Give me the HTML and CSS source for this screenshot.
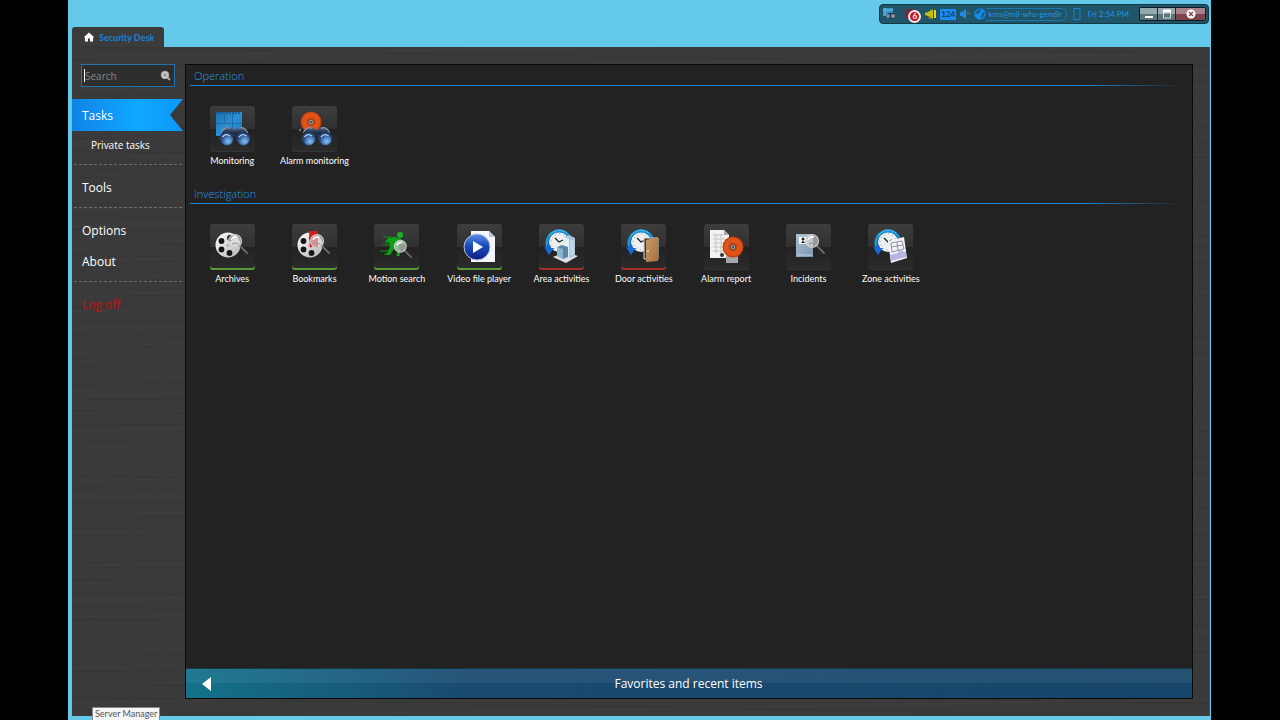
FILE: index.html
```html
<!DOCTYPE html>
<html lang="en">
<head>
<meta charset="utf-8">
<title>Security Desk</title>
<link rel="stylesheet" href="styles.css">
</head>
<body>
<svg class="defs" aria-hidden="true">
  <defs>
    <linearGradient id="screen" x1="0" y1="0" x2="1" y2="1"><stop offset="0" stop-color="#1d6fae"/><stop offset=".5" stop-color="#2b8fd2"/><stop offset="1" stop-color="#1a7cc8"/></linearGradient>
    <radialGradient id="lens" cx=".6" cy=".7"><stop offset="0" stop-color="#8dc0ee"/><stop offset=".6" stop-color="#4c84c4"/><stop offset="1" stop-color="#27467c"/></radialGradient>
    <linearGradient id="barrel" x1="0" y1="0" x2="0" y2="1"><stop offset="0" stop-color="#5c6d88"/><stop offset=".4" stop-color="#1d2a42"/><stop offset="1" stop-color="#35588f"/></linearGradient>
    <radialGradient id="bellfill"><stop offset="0" stop-color="#a83812"/><stop offset=".4" stop-color="#d9480f"/><stop offset=".8" stop-color="#e2561a"/><stop offset="1" stop-color="#b23408"/></radialGradient>
    <linearGradient id="metal" x1="0" y1="0" x2="1" y2="1"><stop offset="0" stop-color="#ffffff"/><stop offset="1" stop-color="#b4b4b4"/></linearGradient>
    <linearGradient id="play" x1="0" y1="0" x2="0" y2="1"><stop offset="0" stop-color="#5c8ee6"/><stop offset=".45" stop-color="#1c4cba"/><stop offset="1" stop-color="#0a1f86"/></linearGradient>
    <linearGradient id="wood" x1="0" y1="0" x2="1" y2="1"><stop offset="0" stop-color="#c89a6c"/><stop offset="1" stop-color="#a8703c"/></linearGradient>
    <linearGradient id="card" x1="0" y1="0" x2="1" y2="1"><stop offset="0" stop-color="#a9bfd2"/><stop offset="1" stop-color="#7c97ae"/></linearGradient>
    <symbol id="binoculars" viewBox="0 0 30 18">
      <path d="M1 11 5 3Q7 0 11 1L14 3H16L19 1Q23 0 25 3L29 11 27 15 18 14 16 9H14L12 14 3 15Z" fill="url(#barrel)"/>
      <path d="M3 6Q6 0 11 2M19 2Q24 0 27 6" stroke="#91a1b8" fill="none"/>
      <circle cx="8" cy="11.500" r="6" fill="url(#lens)" stroke="#243c65" stroke-width=".6"/>
      <circle cx="23" cy="11.500" r="6" fill="url(#lens)" stroke="#243c65" stroke-width=".6"/>
      <path d="M4 10Q7 6 11 9M19 10Q22 6 26 9" stroke="#b8d9f5" fill="none"/>
    </symbol>
    <symbol id="bell" viewBox="0 0 22 22">
      <circle cx="11" cy="11" r="10.500" fill="url(#bellfill)"/>
      <circle cx="11" cy="11" r="6" fill="none" stroke="#f47b3b" stroke-opacity=".3"/>
      <circle cx="11" cy="11" r="2.500" fill="#aaa" stroke="#5c4a42"/>
      <circle cx="11" cy="11" r="1" fill="#333"/>
    </symbol>
    <symbol id="reel" viewBox="0 0 26 26">
      <circle cx="13" cy="13" r="12.500" fill="url(#metal)"/>
      <g fill="#161616"><circle cx="6.500" cy="9" r="2.900"/><circle cx="6.500" cy="17.500" r="2.900"/><circle cx="14.500" cy="21" r="2.900"/><circle cx="15" cy="6" r="2.900"/></g>
      <circle cx="12.500" cy="13.500" r="1" fill="#999"/>
    </symbol>
    <symbol id="magnifier" viewBox="0 0 22 22">
      <path d="M12 12 20 20" stroke="#686868" stroke-width="2" stroke-linecap="round"/>
      <circle cx="8" cy="8" r="6.500" fill="#ddd" fill-opacity=".6" stroke="#c9c9c9" stroke-width="1.200"/>
      <path d="M4 7Q6 3 10 4" stroke="#fff" stroke-width="1.500" fill="none"/>
      <path d="M5 11Q8 9 11 11" stroke="#999" fill="none"/>
    </symbol>
    <symbol id="history" viewBox="0 0 28 28">
      <circle cx="15" cy="14" r="10" fill="#eceff0"/>
      <circle cx="15" cy="14" r="8" fill="none" stroke="#90999e" stroke-dasharray="1 3.200"/>
      <path d="M11 10 15 14 19 12" stroke="#222" stroke-width="1.300" fill="none"/>
      <path d="M26 10A12 12 0 0 0 4 20" stroke="#1c93d6" stroke-width="3" fill="none"/>
      <path d="M23 5A12 12 0 0 0 5 8" stroke="#57c0ed" fill="none"/>
      <path d="M0 19 5 27 10 20 7 20 6 17 3 17 3 20Z" fill="#1668d4"/>
    </symbol>
  </defs>
</svg>

<div class="window">
  <header class="titlebar">
    <div class="tab">
      <svg width="10" height="10" viewBox="0 0 10 10"><path d="M5 .5 0 5 1 6V9.500H4V6.500H6V9.500H9V6L10 5Z" fill="#fff"/></svg>
      <span>Security Desk</span>
    </div>
    <div class="tray">
      <svg width="14" height="14" viewBox="0 0 14 14"><path d="M1 1H11V9H1Z" fill="#3796c4"/><path d="M1 3H11M3 1V9" stroke="#65bddc"/><path d="M4 8Q7 4 13 7L13 10 11 12H8L7 10 5 11 3 10Z" fill="#24364b"/><circle cx="6" cy="9" r="2" fill="#788fa2"/><circle cx="11" cy="9" r="2" fill="#8e9a9f"/></svg>
      <div class="alarms">
        <svg width="16" height="14" viewBox="0 0 16 14"><path d="M3 9V4Q4 2 7 2Q10 2 11 4V9L13 11H1Z" fill="#7a2436"/><path d="M2 1 0 4M12 1 14 4" stroke="#8a2033"/></svg>
        <span class="badge">6</span>
      </div>
      <svg width="13" height="12" viewBox="0 0 13 12"><path d="M1 5 4 4 9 1V11L4 8 1 7Z" fill="#c5bd14"/><path d="M10 2H12V10H10Z" fill="#e0d521"/><path d="M4 8 5 11H7L6 8Z" fill="#8a8a17"/></svg>
      <div class="count">124</div>
      <svg width="12" height="12" viewBox="0 0 12 12"><path d="M1 4H3L7 1V11L3 8H1Z" fill="#208be0"/><path d="M8 4 11 7M11 4 8 7" stroke="#a65a28"/></svg>
      <div class="account">
        <svg width="12" height="12" viewBox="0 0 12 12"><circle cx="6" cy="6" r="5.800" fill="#128be5"/><path d="M1 6Q3 1 7 1L6 4 3 6ZM8 5 11 4 10 8 7 11Z" fill="#1c5c88"/></svg>
        <span class="user">kms@mil-whs-gendir</span>
      </div>
      <svg width="8" height="12" viewBox="0 0 8 12"><rect x="1" y=".5" width="6" height="11" fill="none" stroke="#1b82c8"/></svg>
      <time class="clock">Fri 2:54 PM</time>
      <div class="controls">
        <button aria-label="Minimize"><svg width="10" height="10" viewBox="0 0 10 10"><path d="M1 8H9" stroke="#fff" stroke-width="2"/></svg></button>
        <button aria-label="Maximize"><svg width="10" height="10" viewBox="0 0 10 10"><path d="M1.500 2V9H8.500V2" fill="none" stroke="#ddd"/><path d="M1 2H9" stroke="#fff" stroke-width="3"/></svg></button>
        <button class="close" aria-label="Close"><svg width="10" height="10" viewBox="0 0 10 10"><circle cx="5" cy="5" r="4.500" fill="#fff"/><path d="M3 3 7 7M7 3 3 7" stroke="#7d4a55" stroke-width="1.500"/></svg></button>
      </div>
    </div>
  </header>

  <div class="content">
    <nav class="sidebar">
      <label class="search">
        <input type="text" placeholder="Search" aria-label="Search">
        <svg width="12" height="12" viewBox="0 0 12 12"><path d="M7 7 10 10" stroke="#aaa" stroke-width="2"/><circle cx="5" cy="5" r="3.800" fill="#ccc" stroke="#aaa"/><path d="M3 5H7M5 3V7" stroke="#888"/></svg>
      </label>
      <a class="item active" href="#">Tasks</a>
      <a class="subitem" href="#">Private tasks</a>
      <hr>
      <a class="item" href="#">Tools</a>
      <hr>
      <a class="item" href="#">Options</a>
      <a class="item" href="#">About</a>
      <hr>
      <a class="item logoff" href="#">Log off</a>
    </nav>

    <main class="panel">
      <div class="groups">
        <section>
          <h2>Operation</h2>
          <div class="tiles">
            <button class="tile"><svg class="icon" viewBox="0 0 45 46"><path d="M6 6H32V30H6Z" fill="url(#screen)"/><path d="M7 7H31" stroke="#0c3b66" stroke-dasharray="2 1"/><path d="M6 17.500H32M22.500 8V30M14.500 8V17" stroke="#145b93" stroke-opacity=".6"/><use href="#binoculars" x="8" y="20" width="33" height="20"/></svg><span>Monitoring</span></button>
            <button class="tile"><svg class="icon" viewBox="0 0 45 46"><use href="#bell" x="8" y="5" width="22" height="22"/><circle cx="8" cy="24" r="1" fill="#999"/><use href="#binoculars" x="8" y="20" width="33" height="20"/></svg><span>Alarm monitoring</span></button>
          </div>
        </section>
        <section>
          <h2>Investigation</h2>
          <div class="tiles">
            <button class="tile"><svg class="icon green" viewBox="0 0 45 46"><use href="#reel" x="5" y="8" width="26" height="26"/><use href="#magnifier" x="17" y="9" width="22" height="22"/></svg><span>Archives</span></button>
            <button class="tile"><svg class="icon green" viewBox="0 0 45 46"><use href="#reel" x="5" y="8" width="26" height="26"/><path d="M17 7H26V24L21 22 18 24Z" fill="#d31c1c"/><use href="#magnifier" x="17" y="9" width="22" height="22"/></svg><span>Bookmarks</span></button>
            <button class="tile"><svg class="icon green" viewBox="0 0 45 46"><path d="M9 13H20M11 17H18M6 27H16M9 21H20M10 30H13" stroke="#0b8a12" stroke-width="2" stroke-opacity=".55"/><path d="M14 14 22 13 26 16 25 24 20 25 16 31 12 31 16 23 15 18 11 20Z" fill="#10a018"/><path d="M20 22 25 25 24 32M24 15 30 19" stroke="#12a51a" stroke-width="3" fill="none"/><circle cx="26" cy="11" r="3" fill="#16b41e"/><use href="#magnifier" x="19" y="15" width="20" height="20"/></svg><span>Motion search</span></button>
            <button class="tile"><svg class="icon green" viewBox="0 0 45 46"><path d="M14 7H32L38 13V38H14Z" fill="#f4f6fa"/><path d="M32 7V13H38Z" fill="#b9c4d6"/><circle cx="20" cy="23" r="13" fill="url(#play)" stroke="#b8c4dc"/><path d="M16 17 26 23 16 29Z" fill="#fff"/></svg><span>Video file player</span></button>
            <button class="tile"><svg class="icon red" viewBox="0 0 45 46"><use href="#history" x="5" y="4" width="28" height="28"/><path d="M14 33 26 28 39 32 27 39Z" fill="#dce4ea"/><path d="M25 13 30 11 36 14V32L31 34 25 31Z" fill="#a9c6dc"/><path d="M25 13 30 15V34L25 31Z" fill="#e3eef5"/><path d="M18 23 23 21 29 23V33L24 35 18 32Z" fill="#5a87aa"/><path d="M18 23 24 25V35L18 32Z" fill="#8eb3cd"/><path d="M32 16V31M34 16V31" stroke="#d5e5f0"/></svg><span>Area activities</span></button>
            <button class="tile"><svg class="icon red" viewBox="0 0 45 46"><use href="#history" x="5" y="4" width="28" height="28"/><path d="M23 14H37V35H23Z" fill="#3f3b36" stroke="#dcd9d2"/><path d="M25 16 37 13V37L25 38Z" fill="url(#wood)"/><circle cx="27" cy="27" r="1" fill="#f0d8a0"/></svg><span>Door activities</span></button>
            <button class="tile"><svg class="icon" viewBox="0 0 45 46"><path d="M6 6H20L25 11V34H6Z" fill="#f1f1f1"/><path d="M20 6V11H25Z" fill="#aaa"/><path d="M9 11H20M9 15H21M9 19H21M9 23H21M9 27H21M12 10V29M17 10V29" stroke="#c5c5c5"/><path d="M22 29H34V39H22Z" fill="#a8a8a8"/><circle cx="18" cy="31" r="2" fill="#333"/><use href="#bell" x="18" y="12" width="22" height="22"/></svg><span>Alarm report</span></button>
            <button class="tile"><svg class="icon" viewBox="0 0 45 46"><path d="M10 10H27V33H10Z" fill="url(#card)"/><path d="M11 12H25M11 31H26" stroke="#bdccd8"/><rect x="13" y="13" width="8" height="7" fill="#fff"/><circle cx="17" cy="15" r="1.500" fill="#222"/><path d="M15 19Q17 15 19 19Z" fill="#222"/><use href="#magnifier" x="18" y="9" width="22" height="22"/></svg><span>Incidents</span></button>
            <button class="tile"><svg class="icon" viewBox="0 0 45 46"><use href="#history" x="5" y="4" width="28" height="28"/><path d="M20 17 36 13 39 34 23 39Z" fill="#f2f2f8"/><path d="M22 31 30 29 31 26 38 28 38 33 23 37Z" fill="#b5b4e4"/><path d="M23 19 34 17 36 25 24 28ZM29 18 30 26M23 23 35 21" stroke="#8f90a7" fill="none"/></svg><span>Zone activities</span></button>
          </div>
        </section>
      </div>
      <button class="favorites">
        <svg width="9" height="14" viewBox="0 0 9 14"><path d="M9 0V14L0 7Z" fill="#fff"/></svg>
        <span>Favorites and recent items</span>
      </button>
    </main>
  </div>
  <div class="tooltip" role="tooltip">Server Manager</div>
</div>
</body>
</html>
```
FILE: styles.css
```css
* {
  box-sizing: border-box;
}

body {
  margin: 0;
  padding: 0 69px 0 68px;
  background: #000;
  color: #fff;
  font-family: "Open Sans", "Noto Sans", sans-serif;
  font-size: 12px;
}

button {
  border: 0;
  padding: 0;
  background: none;
  color: inherit;
  font: inherit;
}

a {
  color: inherit;
  text-decoration: none;
}

.defs {
  position: absolute;
  width: 0;
  height: 0;
}

.window {
  position: relative;
  display: flex;
  flex-direction: column;
  min-height: 100vh;
  padding: 0 1px 4px 4px;
  background: #65c9e9;
}

.tab,
.tray,
.tile,
.tooltip {
  font-family: Lato, "Open Sans", sans-serif;
  font-size: 9px;
}

.titlebar {
  display: flex;
  justify-content: space-between;
  align-items: flex-end;
  height: 47px;
}

.tab {
  display: flex;
  align-items: center;
  gap: 5px;
  height: 20px;
  padding: 0 10px 0 12px;
  border-radius: 3px 3px 0 0;
  background: #3b3b3b;
  color: #1683d8;
  font-weight: 700;
}

.tray {
  display: flex;
  align-self: flex-start;
  align-items: center;
  gap: 3px;
  height: 20px;
  margin: 4px 1px 0 0;
  padding: 0 2px;
  border: 1px solid #123846;
  border-radius: 4px;
  background: #205468;
  color: #2295e4;
  font-size: 8px;
}

.alarms {
  position: relative;
  display: flex;
  width: 22px;
  padding-left: 4px;
}

.badge {
  position: absolute;
  top: 3px;
  right: 0;
  width: 13px;
  height: 13px;
  border: 2px solid #f2e9e9;
  border-radius: 50%;
  background: #c31523;
  color: #fff;
  font-weight: 700;
  line-height: 9px;
  text-align: center;
}

.count {
  width: 16px;
  height: 11px;
  background: #1a8df0;
  color: #123a5c;
  font-weight: 700;
  line-height: 11px;
  text-align: center;
}

.account {
  display: flex;
  align-items: center;
  margin-right: 3px;
}

.user {
  height: 13px;
  padding: 0 4px 0 2px;
  border: 1px solid #1b77ad;
  border-left: 0;
  border-radius: 0 6px 6px 0;
  line-height: 11px;
}

.clock {
  margin: 0 7px 0 4px;
}

.controls {
  display: flex;
  border: 1px solid #0d1c22;
  border-radius: 2px;
}

.controls button {
  display: flex;
  align-items: center;
  justify-content: center;
  width: 18px;
  height: 12px;
  border-right: 1px solid #1a2a30;
  background: linear-gradient(#94a8ad 50%, #5c757c 50%);
}

.controls .close {
  width: 29px;
  border-right: 0;
  background: linear-gradient(#a8828a 50%, #7e434d 50%);
}

.content {
  display: flex;
  flex: 1;
  padding: 17px 16px 17px 0;
  border-right: 1px solid #25566b;
  background:
    repeating-linear-gradient(179deg, transparent 0 7px, rgba(255, 255, 255, 0.015) 9px, transparent 11px 17px),
    repeating-linear-gradient(181deg, transparent 0 5px, rgba(0, 0, 0, 0.06) 7px, transparent 8px 13px),
    #3a3a3a;
}

.sidebar {
  display: flex;
  flex-direction: column;
  width: 113px;
}

.search {
  display: flex;
  align-items: center;
  height: 23px;
  margin: 0 10px 12px 9px;
  padding: 0 2px;
  border: 1px solid #2274ae;
  background: #2e2e2e;
}

.search::before {
  content: "";
  width: 1px;
  height: 13px;
  background: #fff;
}

.search input {
  flex: 1;
  min-width: 0;
  padding: 0;
  border: 0;
  outline: 0;
  background: none;
  color: #fff;
  font: inherit;
  font-size: 10px;
}

.search input::placeholder {
  color: #858585;
}

.item {
  height: 31px;
  padding-left: 10px;
  line-height: 33px;
}

.active {
  height: 32px;
  margin-right: 2px;
  background: linear-gradient(90deg, #0f83e8, #10a8ff 60%, #0b97f5);
  clip-path: polygon(0 0, 100% 0, 98px 50%, 100% 100%, 0 100%);
}

.subitem {
  height: 28px;
  padding-left: 19px;
  font-size: 10px;
  line-height: 28px;
}

hr {
  width: 108px;
  margin: 5px 2px 6px;
  border: 0;
  border-top: 1px dashed #6e6e6e;
}

.logoff {
  color: #c2130f;
}

.panel {
  display: flex;
  flex: 1;
  flex-direction: column;
  justify-content: space-between;
  border: 1px solid #080808;
  background: #222;
}

.groups {
  display: grid;
  gap: 12px;
}

h2 {
  height: 21px;
  margin: 0 8px 0 4px;
  padding-left: 4px;
  background: linear-gradient(90deg, #1e86d0 90%, transparent) bottom / 100% 1px no-repeat;
  color: #2a98e2;
  font-size: 11px;
  font-weight: 300;
  line-height: 21px;
}

.tiles {
  display: grid;
  grid-template-columns: repeat(9, 1fr);
  max-width: 741px;
  margin-left: 5px;
  padding-top: 20px;
}

.tile {
  display: flex;
  flex-direction: column;
  align-items: center;
  height: 65px;
  line-height: 17px;
  white-space: nowrap;
}

.icon {
  width: 45px;
  height: 46px;
  border-radius: 3px;
  background: linear-gradient(#3d3d3d, #303030 50%, #222 50%, #2c2c2c);
  box-shadow: inset 0 -1px #353535;
}

.green {
  box-shadow: inset 0 -2px #589a35;
}

.red {
  box-shadow: inset 0 -2px #a8302a;
}

.favorites {
  display: flex;
  align-items: center;
  height: 30px;
  padding: 0 26px 0 16px;
  border-top: 1px solid #143846;
  background:
    linear-gradient(rgba(255, 255, 255, 0.06) 50%, transparent 50%),
    linear-gradient(90deg, #13728a, #1a4a70 28%, #17466a);
}

.favorites span {
  flex: 1;
}

.tooltip {
  position: absolute;
  bottom: 0;
  left: 24px;
  padding: 0 2px;
  border: 1px solid #888;
  border-bottom: 0;
  background: #f5f5f7;
  color: #555;
  line-height: 12px;
}
```
